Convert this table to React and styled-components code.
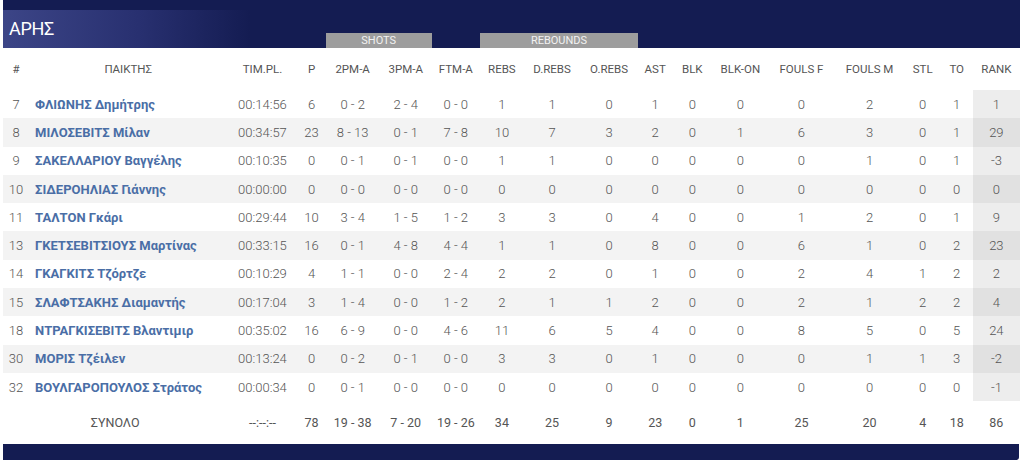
import React from "react";
import styled, { createGlobalStyle } from "styled-components";

const GlobalStyle = createGlobalStyle`
  body {
    margin: 0;
    background: #fff;
    font-family: Roboto, "Noto Sans", "DejaVu Sans", sans-serif;
  }
`;

const Page = styled.div`
  padding: 0 4px 0 3px;
  width: 1024px;
  box-sizing: border-box;
`;

const Table = styled.table`
  width: 1017px;
  border-collapse: collapse;
  table-layout: fixed;
  font-size: 13px;
  color: #5a5a5a;
`;

const BandRow = styled.tr`
  background: #141c52;
  height: 48px;
`;

const BandCell = styled.td`
  padding: 0;
  vertical-align: bottom;
`;

const TeamTitle = styled.div`
  width: 247px;
  height: 38px;
  box-sizing: border-box;
  padding: 8px 0 0 6px;
  background: linear-gradient(90deg, #3c4587 0%, #283070 55%, #141c52 100%);
  color: #fff;
  font-size: 18px;
  letter-spacing: -0.3px;
`;

const GroupLabel = styled.div`
  height: 15px;
  background: #9d9d9d;
  color: #f2f2f2;
  font-size: 11px;
  line-height: 15px;
  text-align: center;
`;

const HeadRow = styled.tr`
  height: 42px;
`;

const Th = styled.th`
  font-weight: 400;
  font-size: 11.5px;
  color: #555;
  text-align: center;
  padding: 0;
  white-space: nowrap;
`;

const Row = styled.tr`
  height: 28.3px;
  background: ${(p) => (p.$alt ? "#f3f3f3" : "#fff")};
`;

const Td = styled.td`
  text-align: center;
  padding: 0;
  white-space: nowrap;
  font-weight: 300;
  color: #555;
`;

const NameCell = styled.td`
  padding: 0 0 0 6px;
  text-align: left;
  white-space: nowrap;
  font-weight: 700;
  font-size: 13px;
  color: #4a6ea6;
`;

const RankCell = styled(Td)`
  background: ${(p) => (p.$alt ? "#e1e1e1" : "#ededed")};
`;

const TotalRow = styled.tr`
  height: 42px;
  background: #fff;
`;

const TotalCell = styled(Td)`
  font-weight: 400;
  font-size: 12.5px;
`;

const FooterBar = styled.div`
  height: 16px;
  margin-top: 1px;
  background: #141c52;
  border-bottom-right-radius: 3px;
  width: 1016px;
`;

const widths = [26, 198, 70, 28, 54, 52, 48, 44, 56, 58, 34, 40, 56, 66, 70, 36, 32, 47];

const headers = [
  "#", "ΠΑΙΚΤΗΣ", "TIM.PL.", "P", "2PM-A", "3PM-A", "FTM-A", "REBS", "D.REBS",
  "O.REBS", "AST", "BLK", "BLK-ON", "FOULS F", "FOULS M", "STL", "TO", "RANK",
];

const players = [
  ["7", "ΦΛΙΩΝΗΣ Δημήτρης", "00:14:56", "6", "0 - 2", "2 - 4", "0 - 0", "1", "1", "0", "1", "0", "0", "0", "2", "0", "1", "1"],
  ["8", "ΜΙΛΟΣΕΒΙΤΣ Μίλαν", "00:34:57", "23", "8 - 13", "0 - 1", "7 - 8", "10", "7", "3", "2", "0", "1", "6", "3", "0", "1", "29"],
  ["9", "ΣΑΚΕΛΛΑΡΙΟΥ Βαγγέλης", "00:10:35", "0", "0 - 1", "0 - 1", "0 - 0", "1", "1", "0", "0", "0", "0", "0", "1", "0", "1", "-3"],
  ["10", "ΣΙΔΕΡΟΗΛΙΑΣ Γιάννης", "00:00:00", "0", "0 - 0", "0 - 0", "0 - 0", "0", "0", "0", "0", "0", "0", "0", "0", "0", "0", "0"],
  ["11", "ΤΑΛΤΟΝ Γκάρι", "00:29:44", "10", "3 - 4", "1 - 5", "1 - 2", "3", "3", "0", "4", "0", "0", "1", "2", "0", "1", "9"],
  ["13", "ΓΚΕΤΣΕΒΙΤΣΙΟΥΣ Μαρτίνας", "00:33:15", "16", "0 - 1", "4 - 8", "4 - 4", "1", "1", "0", "8", "0", "0", "6", "1", "0", "2", "23"],
  ["14", "ΓΚΑΓΚΙΤΣ Τζόρτζε", "00:10:29", "4", "1 - 1", "0 - 0", "2 - 4", "2", "2", "0", "1", "0", "0", "2", "4", "1", "2", "2"],
  ["15", "ΣΛΑΦΤΣΑΚΗΣ Διαμαντής", "00:17:04", "3", "1 - 4", "0 - 0", "1 - 2", "2", "1", "1", "2", "0", "0", "2", "1", "2", "2", "4"],
  ["18", "ΝΤΡΑΓΚΙΣΕΒΙΤΣ Βλαντιμιρ", "00:35:02", "16", "6 - 9", "0 - 0", "4 - 6", "11", "6", "5", "4", "0", "0", "8", "5", "0", "5", "24"],
  ["30", "ΜΟΡΙΣ Τζέιλεν", "00:13:24", "0", "0 - 2", "0 - 1", "0 - 0", "3", "3", "0", "1", "0", "0", "0", "1", "1", "3", "-2"],
  ["32", "ΒΟΥΛΓΑΡΟΠΟΥΛΟΣ Στράτος", "00:00:34", "0", "0 - 1", "0 - 0", "0 - 0", "0", "0", "0", "0", "0", "0", "0", "0", "0", "0", "-1"],
];

const totals = ["--:--:--", "78", "19 - 38", "7 - 20", "19 - 26", "34", "25", "9", "23", "0", "1", "25", "20", "4", "18", "86"];

function PlayerRow({ player, alt }) {
  const [num, name, ...stats] = player;
  const rank = stats.pop();
  return (
    <Row $alt={alt}>
      <Td>{num}</Td>
      <NameCell>{name}</NameCell>
      {stats.map((s, i) => (
        <Td key={i}>{s}</Td>
      ))}
      <RankCell $alt={alt}>{rank}</RankCell>
    </Row>
  );
}

export default function App() {
  return (
    <Page>
      <GlobalStyle />
      <Table>
        <colgroup>
          {widths.map((w, i) => (
            <col key={i} style={{ width: w }} />
          ))}
        </colgroup>
        <thead>
          <BandRow>
            <BandCell colSpan={4}>
              <TeamTitle>ΑΡΗΣ</TeamTitle>
            </BandCell>
            <BandCell colSpan={2}>
              <GroupLabel>SHOTS</GroupLabel>
            </BandCell>
            <BandCell />
            <BandCell colSpan={3}>
              <GroupLabel>REBOUNDS</GroupLabel>
            </BandCell>
            <BandCell colSpan={8} />
          </BandRow>
          <HeadRow>
            {headers.map((h) => (
              <Th key={h}>{h}</Th>
            ))}
          </HeadRow>
        </thead>
        <tbody>
          {players.map((p, i) => (
            <PlayerRow key={p[0]} player={p} alt={i % 2 === 1} />
          ))}
          <TotalRow>
            <TotalCell colSpan={2}>ΣΥΝΟΛΟ</TotalCell>
            {totals.map((t, i) => (
              <TotalCell key={i}>{t}</TotalCell>
            ))}
          </TotalRow>
        </tbody>
      </Table>
      <FooterBar />
    </Page>
  );
}
